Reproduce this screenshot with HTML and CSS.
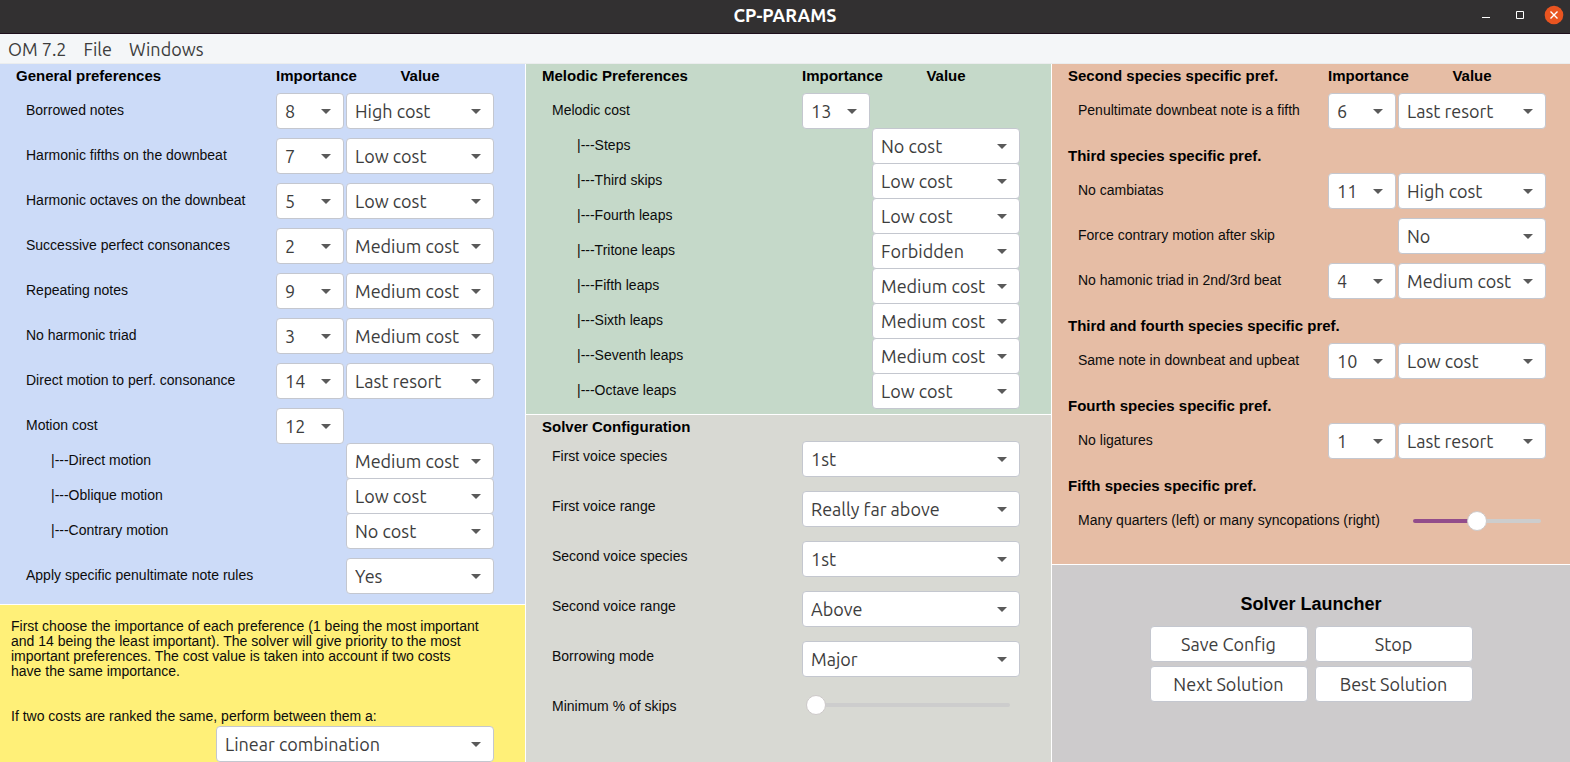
FILE: index.html
```html
<!DOCTYPE html>
<html lang="en">
<head>
<meta charset="utf-8">
<title>CP-PARAMS</title>
<link rel="stylesheet" href="styles.css">
</head>
<body>
<header class="titlebar">
  <h1 class="titlebar-name">CP-PARAMS</h1>
  <div class="window-buttons">
    <button type="button" aria-label="Minimize"><svg width="20" height="20" viewBox="0 0 20 20"><path d="M6 12.500h8" stroke="#fff" fill="none"/></svg></button>
    <button type="button" aria-label="Maximize"><svg width="20" height="20" viewBox="0 0 20 20"><path d="M6.500 6.500h7v7h-7z" stroke="#fff" fill="none"/></svg></button>
    <button type="button" aria-label="Close"><svg width="20" height="20" viewBox="0 0 20 20"><circle cx="10" cy="10" r="9.300" fill="#e95420"/><path d="M6.500 6.500l7 7M13.500 6.500l-7 7" stroke="#fff" stroke-width="1.400" fill="none"/></svg></button>
  </div>
</header>
<nav class="menubar">
  <button type="button">OM 7.2</button>
  <button type="button">File</button>
  <button type="button">Windows</button>
</nav>
<main class="board">
  <div class="column">
    <section class="panel general">
      <div class="row heading"><h2>General preferences</h2><span>Importance</span><span class="center">Value</span></div>
      <div class="rows spaced">
        <div class="row"><label for="g1">Borrowed notes</label><select aria-label="Borrowed notes importance"><option>8</option></select><select id="g1"><option>High cost</option></select></div>
        <div class="row"><label for="g2">Harmonic fifths on the downbeat</label><select aria-label="Harmonic fifths importance"><option>7</option></select><select id="g2"><option>Low cost</option></select></div>
        <div class="row"><label for="g3">Harmonic octaves on the downbeat</label><select aria-label="Harmonic octaves importance"><option>5</option></select><select id="g3"><option>Low cost</option></select></div>
        <div class="row"><label for="g4">Successive perfect consonances</label><select aria-label="Successive perfect consonances importance"><option>2</option></select><select id="g4"><option>Medium cost</option></select></div>
        <div class="row"><label for="g5">Repeating notes</label><select aria-label="Repeating notes importance"><option>9</option></select><select id="g5"><option>Medium cost</option></select></div>
        <div class="row"><label for="g6">No harmonic triad</label><select aria-label="No harmonic triad importance"><option>3</option></select><select id="g6"><option>Medium cost</option></select></div>
        <div class="row"><label for="g7">Direct motion to perf. consonance</label><select aria-label="Direct motion importance"><option>14</option></select><select id="g7"><option>Last resort</option></select></div>
        <div class="rows">
          <div class="row"><label for="g8">Motion cost</label><select id="g8"><option>12</option></select></div>
          <div class="row sub"><label for="g9">|---Direct motion</label><select id="g9" class="value"><option>Medium cost</option></select></div>
          <div class="row sub"><label for="g10">|---Oblique motion</label><select id="g10" class="value"><option>Low cost</option></select></div>
          <div class="row sub"><label for="g11">|---Contrary motion</label><select id="g11" class="value"><option>No cost</option></select></div>
        </div>
        <div class="row"><label for="g12">Apply specific penultimate note rules</label><select id="g12" class="value"><option>Yes</option></select></div>
      </div>
    </section>
    <section class="panel help">
      <p>First choose the importance of each preference (1 being the most important<br>and 14 being the least important). The solver will give priority to the most<br>important preferences. The cost value is taken into account if two costs<br>have the same importance.</p>
      <label for="combine">If two costs are ranked the same, perform between them a:</label>
      <select id="combine"><option>Linear combination</option></select>
    </section>
  </div>

  <div class="column">
    <section class="panel melodic">
      <div class="row heading"><h2>Melodic Preferences</h2><span>Importance</span><span class="center">Value</span></div>
      <div class="rows">
        <div class="row"><label for="m1">Melodic cost</label><select id="m1"><option>13</option></select></div>
        <div class="row sub"><label for="m2">|---Steps</label><select id="m2" class="value"><option>No cost</option></select></div>
        <div class="row sub"><label for="m3">|---Third skips</label><select id="m3" class="value"><option>Low cost</option></select></div>
        <div class="row sub"><label for="m4">|---Fourth leaps</label><select id="m4" class="value"><option>Low cost</option></select></div>
        <div class="row sub"><label for="m5">|---Tritone leaps</label><select id="m5" class="value"><option>Forbidden</option></select></div>
        <div class="row sub"><label for="m6">|---Fifth leaps</label><select id="m6" class="value"><option>Medium cost</option></select></div>
        <div class="row sub"><label for="m7">|---Sixth leaps</label><select id="m7" class="value"><option>Medium cost</option></select></div>
        <div class="row sub"><label for="m8">|---Seventh leaps</label><select id="m8" class="value"><option>Medium cost</option></select></div>
        <div class="row sub"><label for="m9">|---Octave leaps</label><select id="m9" class="value"><option>Low cost</option></select></div>
      </div>
    </section>
    <section class="panel solver">
      <div class="row heading"><h2>Solver Configuration</h2></div>
      <div class="rows wide">
        <div class="row"><label for="s1">First voice species</label><select id="s1"><option>1st</option></select></div>
        <div class="row"><label for="s2">First voice range</label><select id="s2"><option>Really far above</option></select></div>
        <div class="row"><label for="s3">Second voice species</label><select id="s3"><option>1st</option></select></div>
        <div class="row"><label for="s4">Second voice range</label><select id="s4"><option>Above</option></select></div>
        <div class="row"><label for="s5">Borrowing mode</label><select id="s5"><option>Major</option></select></div>
        <div class="row"><label for="s6">Minimum % of skips</label><input id="s6" class="slider skips" type="range" min="0" max="100" value="0"></div>
      </div>
    </section>
  </div>

  <div class="column">
    <section class="panel species">
      <div class="row heading"><h2>Second species specific pref.</h2><span>Importance</span><span class="center">Value</span></div>
      <div class="rows spaced">
        <div class="row"><label for="p1">Penultimate downbeat note is a fifth</label><select aria-label="Penultimate downbeat note importance"><option>6</option></select><select id="p1"><option>Last resort</option></select></div>
      </div>
      <div class="row heading"><h2>Third species specific pref.</h2></div>
      <div class="rows spaced">
        <div class="row"><label for="p2">No cambiatas</label><select aria-label="No cambiatas importance"><option>11</option></select><select id="p2"><option>High cost</option></select></div>
        <div class="row"><label for="p3">Force contrary motion after skip</label><select id="p3" class="value"><option>No</option></select></div>
        <div class="row"><label for="p4">No hamonic triad in 2nd/3rd beat</label><select aria-label="No hamonic triad importance"><option>4</option></select><select id="p4"><option>Medium cost</option></select></div>
      </div>
      <div class="row heading"><h2>Third and fourth species specific pref.</h2></div>
      <div class="rows spaced">
        <div class="row"><label for="p5">Same note in downbeat and upbeat</label><select aria-label="Same note importance"><option>10</option></select><select id="p5"><option>Low cost</option></select></div>
      </div>
      <div class="row heading"><h2>Fourth species specific pref.</h2></div>
      <div class="rows spaced">
        <div class="row"><label for="p6">No ligatures</label><select aria-label="No ligatures importance"><option>1</option></select><select id="p6"><option>Last resort</option></select></div>
      </div>
      <div class="row heading"><h2>Fifth species specific pref.</h2></div>
      <div class="rows spaced">
        <div class="row"><label for="p7">Many quarters (left) or many syncopations (right)</label><input id="p7" class="slider balance value" type="range" min="0" max="100" value="50"></div>
      </div>
    </section>
    <section class="panel launcher">
      <h2>Solver Launcher</h2>
      <div class="actions">
        <button type="button">Save Config</button>
        <button type="button">Stop</button>
        <button type="button">Next Solution</button>
        <button type="button">Best Solution</button>
      </div>
    </section>
  </div>
</main>
</body>
</html>
```
FILE: styles.css
```css
* {
  box-sizing: border-box;
}

body {
  display: flex;
  flex-direction: column;
  min-height: 100vh;
  margin: 0;
  background: #fff;
  color: #0c0c0c;
  font: 14px/15px "Liberation Sans", Arial, sans-serif;
}

h1, h2, p {
  margin: 0;
}

button, select {
  color: #3d3d3d;
  font: 18px/24px Ubuntu, "Noto Sans", sans-serif;
}

/* Window frame */
.titlebar {
  display: grid;
  grid-template-columns: 1fr auto 1fr;
  align-items: center;
  height: 34px;
  padding: 0 6px 3px;
  border-bottom: 1px solid #1d0f1c;
  background: #323031;
}

.titlebar-name {
  grid-column: 2;
  color: #fff;
  font: bold 18px/24px Ubuntu, "Noto Sans", sans-serif;
}

.window-buttons {
  display: flex;
  justify-content: flex-end;
  gap: 14px;
}

.window-buttons button {
  width: 20px;
  height: 20px;
  padding: 0;
  border: 0;
  background: none;
}

.window-buttons svg {
  display: block;
}

.menubar {
  display: flex;
  align-items: center;
  gap: 17px;
  height: 30px;
  padding: 0 8px;
  border-bottom: 1px solid #ebedee;
  background: #f4f6f8;
}

.menubar button {
  padding: 0;
  border: 0;
  background: none;
}

/* Panels */
.board {
  display: grid;
  flex: 1;
  grid-template-columns: 525fr 525fr 518fr;
  column-gap: 1px;
}

.column {
  display: flex;
  flex-direction: column;
  gap: 1px;
  min-width: 0;
}

.column > :last-child {
  flex: 1;
}

.panel {
  padding: 0 31px 0 16px;
}

.general {
  padding-bottom: 11px;
  background: #ccdbf8;
}

.help {
  display: flex;
  flex-direction: column;
  padding-top: 14px;
  padding-left: 11px;
  background: #fff078;
}

.melodic {
  padding-bottom: 6px;
  background: #c5d9c9;
}

.solver {
  background: #d8d9d3;
}

.species {
  padding-right: 24px;
  padding-bottom: 26px;
  background: #e6bda5;
}

.launcher {
  padding: 27px 16px;
  background: #cdcbcc;
  text-align: center;
}

/* Rows */
.row {
  display: grid;
  grid-template-columns: minmax(0, 1fr) 68px 148px;
  column-gap: 2px;
  height: 35px;
  line-height: 35px;
  white-space: nowrap;
}

.row label {
  padding-left: 10px;
}

.sub label {
  padding-left: 35px;
}

.heading {
  height: 24px;
  margin-bottom: 5px;
  color: #000;
  font-size: 15px;
  font-weight: bold;
  line-height: 24px;
}

.heading h2 {
  font-size: 15px;
}

.center {
  text-align: center;
}

.rows + .heading {
  margin-top: 16px;
}

.rows {
  display: grid;
}

.spaced {
  row-gap: 10px;
}

.value {
  grid-column: 3;
}

.solver .heading {
  margin-bottom: 2px;
}

.wide {
  row-gap: 15px;
}

.wide .row {
  grid-template-columns: minmax(0, 1fr) 218px;
  line-height: 30px;
}

/* Controls */
select {
  width: 100%;
  height: 36px;
  padding: 0 24px 0 8px;
  border: 1px solid #c4c7cf;
  border-radius: 4px;
  appearance: none;
  background: #fff url("data:image/svg+xml,%3Csvg xmlns='http://www.w3.org/2000/svg' width='10' height='5'%3E%3Cpath d='M0 0h10L5 5z' fill='%235a5a5a'/%3E%3C/svg%3E") no-repeat right 12px center;
}

.help p {
  margin-bottom: 30px;
}

.help select {
  align-self: flex-end;
  width: 278px;
  margin-top: 2px;
}

.slider {
  height: 20px;
  margin: 0;
  appearance: none;
  background: none;
}

.slider::-webkit-slider-runnable-track {
  height: 4px;
  border-radius: 2px;
  background: #cdcdcd;
}

.slider::-webkit-slider-thumb {
  width: 20px;
  height: 20px;
  margin-top: -8px;
  border: 1px solid #cdc9c9;
  border-radius: 50%;
  appearance: none;
  background: #fff;
}

.skips {
  margin: 4px 10px 0 4px;
}

.balance {
  margin: 8px 5px 0 15px;
}

.balance::-webkit-slider-runnable-track {
  background: linear-gradient(to right, #924d8b 50%, #cdcdcd 50%);
}

.launcher h2 {
  margin-bottom: 10px;
  color: #000;
  font-size: 18px;
  line-height: 24px;
}

.actions {
  display: grid;
  grid-template-columns: 158px 158px;
  gap: 4px 7px;
  justify-content: center;
}

.actions button {
  height: 36px;
  padding: 0;
  border: 1px solid #c4c7cf;
  border-radius: 4px;
  background: #fff;
}
```
